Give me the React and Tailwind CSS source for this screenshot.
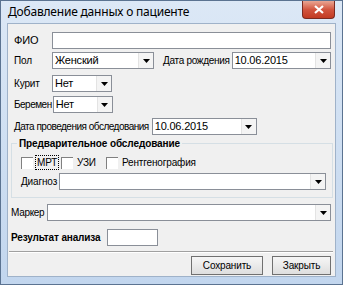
import React from 'react';

const font = { fontFamily: '"Liberation Sans", Arial, sans-serif' };

/**
 * Combo - WinForms-like dropdown box
 */
const Combo = ({ value = '', className = '' }) => (
  <div className={`flex h-[17px] shrink-0 items-stretch border border-[#8a8f98] bg-white ${className}`}>
    <span className="flex-1 truncate pl-[2px] text-[11px] leading-[15px] tracking-[-0.2px] text-black">{value}</span>
    <span className="flex w-[15px] items-center justify-center border-l border-[#e3e3e3] bg-[#f4f4f4]">
      <svg width="7" height="4" viewBox="0 0 7 4">
        <path d="M0 0h7L3.5 4z" fill="#000" />
      </svg>
    </span>
  </div>
);

const TextBox = ({ className = '' }) => (
  <div className={`h-[17px] shrink-0 border border-[#8a8f98] bg-white ${className}`} />
);

const Label = ({ children, className = '' }) => (
  <span className={`shrink-0 whitespace-nowrap leading-[13px] ${className}`}>{children}</span>
);

const CheckBox = ({ label, focused, className = '' }) => (
  <div className={`flex shrink-0 items-center gap-[2px] ${className}`}>
    <span className="h-[12px] w-[12px] border-l border-t border-[#808080] bg-white" />
    <span className={`whitespace-nowrap px-[1px] leading-[13px] ${focused ? 'border border-dotted border-black' : 'border border-transparent'}`}>
      {label}
    </span>
  </div>
);

const Button = ({ children, className = '' }) => (
  <div className={`flex h-[19px] items-center justify-center border border-[#707070] bg-gradient-to-b from-[#f6f6f6] to-[#dedede] text-[10px] ${className}`}>
    {children}
  </div>
);

export default function App() {
  return (
    <div className="h-[285px] w-[343px] overflow-hidden bg-white" style={font}>
      <div className="flex h-[285px] w-[343px] flex-col border border-[#5b7391] bg-gradient-to-b from-[#dce8f6] to-[#c2d6ee]">
        {/* Title bar */}
        <div className="flex h-[22px] shrink-0 items-start justify-between">
          <span className="pl-[7px] pt-[4px] text-[12px] leading-[14px] tracking-[-0.2px] text-black" style={{ fontFamily: '"Noto Sans", "Liberation Sans", sans-serif' }}>
            Добавление данных о пациенте
          </span>
          <div className="mr-[7px] flex h-[18px] w-[33px] items-center justify-center rounded-b-[4px] border border-t-0 border-[#7a2a20] bg-gradient-to-b from-[#e8a593] via-[#d2553f] to-[#c23a22]">
            <svg width="10" height="9" viewBox="0 0 10 9">
              <path d="M1 1l8 7M9 1L1 8" stroke="#fff" strokeWidth="2.2" />
            </svg>
          </div>
        </div>

        {/* Client area */}
        <div className="mx-[6px] flex h-[254px] shrink-0 flex-col overflow-hidden border border-[#9fb2c9] bg-[#f0f0f0] pl-[6px] pr-[4px] pt-[8px] text-[10px] tracking-[-0.15px] text-black">
          <div className="flex items-center">
            <Label className="w-[38px] text-[11px]">ФИО</Label>
            <TextBox className="flex-1" />
          </div>

          <div className="mt-[3px] flex items-center">
            <Label className="w-[38px]">Пол</Label>
            <Combo value="Женский" className="w-[102px]" />
            <Label className="ml-[9px] mr-[2px] tracking-[-0.3px]">Дата рождения</Label>
            <Combo value="10.06.2015" className="flex-1" />
          </div>

          <div className="mt-[6px] flex items-center">
            <Label className="w-[38px]">Курит</Label>
            <Combo value="Нет" className="w-[60px]" />
          </div>

          <div className="mt-[4px] flex items-center">
            <Label className="mr-[1px] tracking-[-0.5px]">Беремен</Label>
            <Combo value="Нет" className="w-[60px]" />
          </div>

          <div className="mt-[5px] flex items-center">
            <Label className="mr-[3px] tracking-[-0.5px]">Дата проведения обследования</Label>
            <Combo value="10.06.2015" className="w-[105px]" />
          </div>

          {/* Group box */}
          <div className="relative ml-[-3px] mr-[-2px] mt-[8px] h-[55px] shrink-0 border border-[#d5dfe5] pl-[9px] pr-[6px] pt-[11px]">
            <span className="absolute left-[5px] top-[-7px] whitespace-nowrap bg-[#f0f0f0] px-[2px] text-[10px] font-bold leading-[13px] tracking-[-0.1px]">
              Предварительное обследование
            </span>
            <div className="flex items-center">
              <CheckBox label="МРТ" focused className="w-[40px]" />
              <CheckBox label="УЗИ" className="w-[45px]" />
              <CheckBox label="Рентгенография" />
            </div>
            <div className="mt-[3px] flex items-center">
              <Label className="w-[38px]">Диагноз</Label>
              <Combo className="flex-1" />
            </div>
          </div>

          <div className="ml-[-3px] mt-[6px] flex items-center">
            <Label className="w-[36px] tracking-[-0.3px]">Маркер</Label>
            <Combo className="flex-1" />
          </div>

          <div className="ml-[-3px] mt-[8px] flex items-center">
            <Label className="w-[96px] font-bold">Результат анализа</Label>
            <TextBox className="w-[51px]" />
          </div>

          <div className="ml-[-5px] mr-[-2px] mt-[5px] shrink-0 border-b border-t border-b-white border-t-[#a0a0a0]" />

          <div className="mt-[3px] flex justify-end">
            <Button className="w-[72px]">Сохранить</Button>
            <Button className="ml-[9px] w-[59px]">Закрыть</Button>
          </div>
        </div>
      </div>
    </div>
  );
}
